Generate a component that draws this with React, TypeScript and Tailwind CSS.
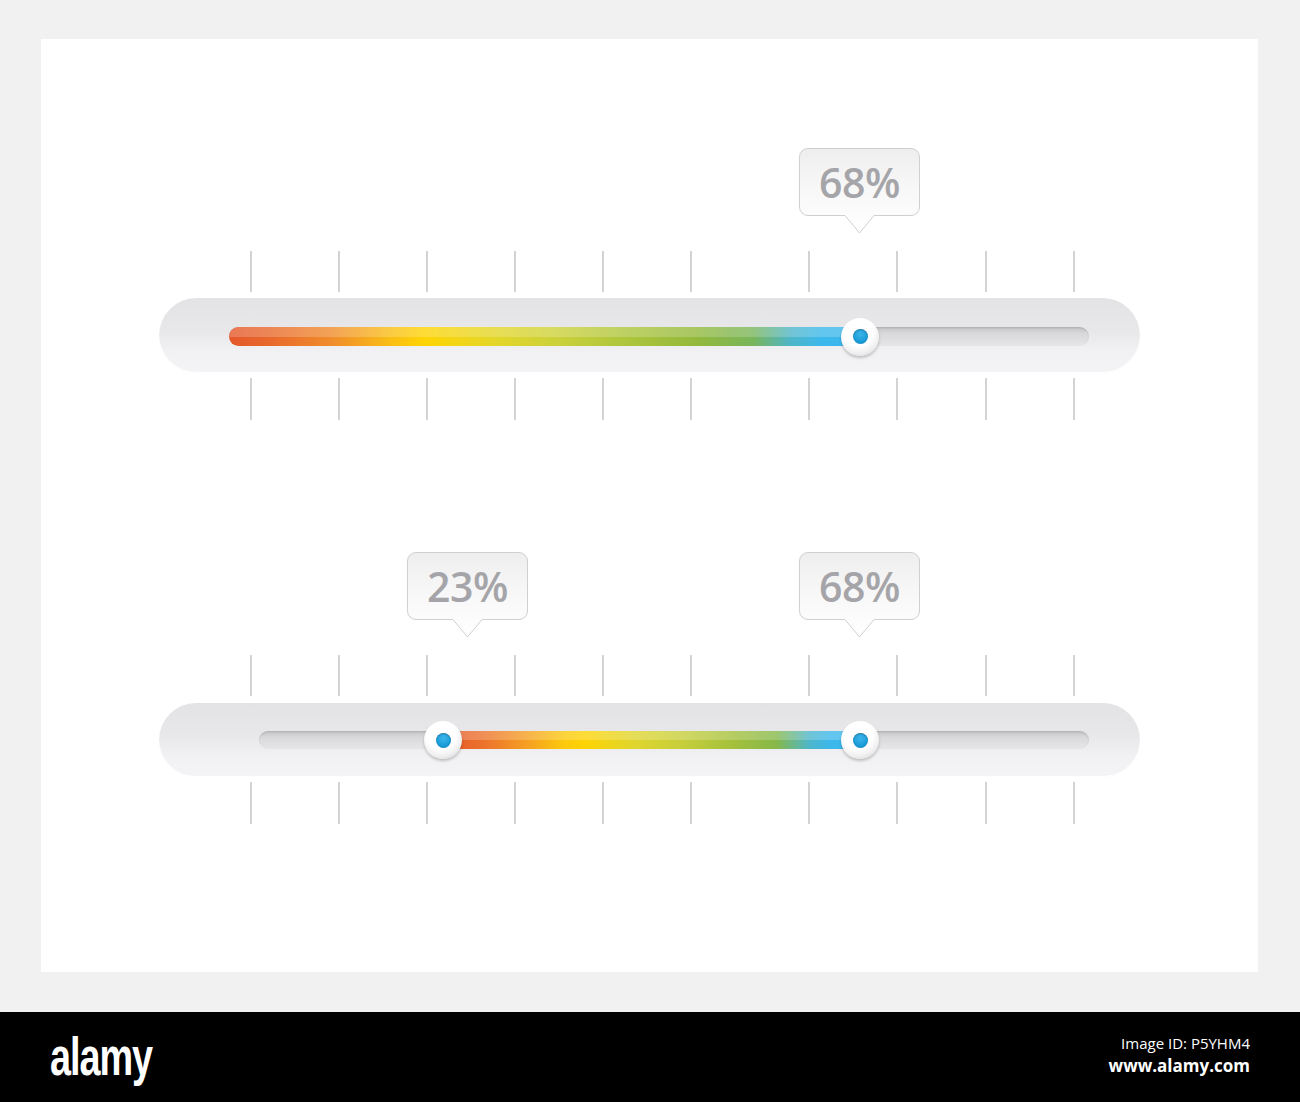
import React from "react";

// Tick positions along the scale, in px from the left edge of the slider pill
const TICKS = [92, 180, 268, 356, 444, 532, 650, 738, 827, 915];

function Ticks({ height }: { height: number }) {
  return (
    <div className="flex" style={{ height }}>
      {TICKS.map((x, i) => (
        <div
          key={i}
          className="w-[2px] h-full bg-[#d3d3d5] shrink-0"
          style={{ marginLeft: i === 0 ? x - 1 : x - TICKS[i - 1] - 2 }}
        />
      ))}
    </div>
  );
}

function Bubble({ label, center }: { label: string; center: number }) {
  const gid = `bubble-${label.replace("%", "")}-${center}`;
  return (
    <div className="absolute top-0 w-[121px] h-[86px]" style={{ left: center - 60 }}>
      <svg width="121" height="86" viewBox="0 0 121 86" className="absolute inset-0">
        <defs>
          <linearGradient id={gid} x1="0" y1="0" x2="0" y2="1">
            <stop offset="0" stopColor="#eeeeef" />
            <stop offset="0.45" stopColor="#f7f7f8" />
            <stop offset="1" stopColor="#ffffff" />
          </linearGradient>
        </defs>
        <path
          d="M9 0.5 H112 A8.5 8.5 0 0 1 120.5 9 V59 A8.5 8.5 0 0 1 112 67.5 H75 L60.5 85 L46 67.5 H9 A8.5 8.5 0 0 1 0.5 59 V9 A8.5 8.5 0 0 1 9 0.5 Z"
          fill={`url(#${gid})`}
          stroke="#d0d0d3"
          strokeWidth="1"
        />
      </svg>
      <div className="relative h-[68px] flex items-center justify-center font-['Open_Sans',sans-serif] font-semibold text-[41px] leading-none text-[#a5a5a9] tracking-[-0.5px]">
        {label}
      </div>
    </div>
  );
}

function Knob({ x }: { x: number }) {
  return (
    <div
      className="absolute top-1/2 -translate-y-1/2 -translate-x-1/2 w-[38px] h-[38px] rounded-full bg-[radial-gradient(circle_at_45%_35%,#ffffff_0%,#ffffff_45%,#efeff0_68%,#cfcfd2_92%,#c3c3c6_100%)] shadow-[0_2px_3px_rgba(0,0,0,0.22)] flex items-center justify-center"
      style={{ left: x }}
    >
      <div className="w-[15px] h-[15px] rounded-full bg-[radial-gradient(circle_at_50%_35%,#3cb6ea_0%,#1b9bd7_60%,#0f80bb_100%)] shadow-[inset_0_1px_1px_rgba(0,0,0,0.25)]" />
    </div>
  );
}

function Pill({ children, height }: { children: React.ReactNode; height: number }) {
  return (
    <div
      className="w-[981px] rounded-full bg-[linear-gradient(180deg,#e3e3e5_0%,#e8e8ea_45%,#f1f1f3_70%,#f4f4f6_100%)] shadow-[inset_0_-1px_0_rgba(255,255,255,0.9)]"
      style={{ height }}
    >
      {children}
    </div>
  );
}

function SingleSlider() {
  // groove runs from 70px to 930px inside the pill; knob sits at 701px
  return (
    <div className="relative w-[981px]">
      <div className="relative h-[85px]">
        <Bubble label="68%" center={700} />
      </div>
      <div className="mt-[18px]">
        <Ticks height={41} />
      </div>
      <div className="mt-[6px]">
        <Pill height={75}>
          <div className="pt-[29px] pl-[70px] pr-[51px]">
            <div className="relative h-[19px] rounded-full bg-[linear-gradient(180deg,#c4c4c6_0%,#d9d9db_35%,#e6e6e8_100%)] shadow-[inset_0_1px_2px_rgba(0,0,0,0.12)]">
              <div className="absolute left-0 top-0 h-full w-[631px] rounded-full bg-[linear-gradient(90deg,#e4572b_0%,#e96a2c_7%,#f08b2c_16%,#f9bb17_25%,#fed404_31%,#e4d629_42%,#cbd13a_52%,#b0c63c_62%,#93b93c_74%,#79b55a_83%,#4fb6c8_89%,#3cb8ec_94%,#3cb8ec_100%)]">
                <div className="absolute inset-x-0 top-0 h-1/2 rounded-t-full bg-white/20" />
              </div>
              <Knob x={631} />
            </div>
          </div>
        </Pill>
      </div>
      <div className="mt-[5px]">
        <Ticks height={42} />
      </div>
    </div>
  );
}

function RangeSlider() {
  // groove runs from 100px to 930px inside the pill; knobs at 284px and 701px
  return (
    <div className="relative w-[981px]">
      <div className="relative h-[85px]">
        <Bubble label="23%" center={308} />
        <Bubble label="68%" center={700} />
      </div>
      <div className="mt-[18px]">
        <Ticks height={41} />
      </div>
      <div className="mt-[7px]">
        <Pill height={74}>
          <div className="pt-[28px] pl-[100px] pr-[51px]">
            <div className="relative h-[18px] rounded-full bg-[linear-gradient(180deg,#c4c4c6_0%,#d9d9db_35%,#e6e6e8_100%)] shadow-[inset_0_1px_2px_rgba(0,0,0,0.12)]">
              <div className="absolute left-[184px] top-0 h-full w-[417px] bg-[linear-gradient(90deg,#e4572b_0%,#ec732c_10%,#f59f22_20%,#fcc90c_29%,#fed404_34%,#dfd52e_46%,#c5ce3b_58%,#a3c03c_70%,#86b84a_80%,#4db6cc_88%,#3cb8ec_93%,#3cb8ec_100%)]">
                <div className="absolute inset-x-0 top-0 h-1/2 bg-white/20" />
              </div>
              <Knob x={184} />
              <Knob x={601} />
            </div>
          </div>
        </Pill>
      </div>
      <div className="mt-[5px]">
        <Ticks height={42} />
      </div>
    </div>
  );
}

export default function App() {
  return (
    <div className="w-[1300px] h-[1102px] bg-[#f1f1f2] flex flex-col">
      <div className="pt-[39px] pb-[40px] pl-[41px] pr-[42px]">
        <div className="bg-white h-[933px] pt-[109px] pl-[118px]">
          <SingleSlider />
          <div className="mt-[132px]">
            <RangeSlider />
          </div>
        </div>
      </div>
      <footer className="h-[90px] bg-black flex items-center justify-between pl-[50px] pr-[50px]">
        <div className="w-[110px] h-[60px] flex items-center">
          <span className="inline-block origin-left scale-x-[0.7] font-['Liberation_Sans',Arial,sans-serif] font-bold text-[54px] leading-none text-white tracking-[-1.5px] -mt-[2px]">
            alamy
          </span>
        </div>
        <div className="flex flex-col items-end text-white font-['Open_Sans',sans-serif] -mt-[4px]">
          <span className="text-[15px] leading-[22px]">Image ID: P5YHM4</span>
          <span className="text-[17px] leading-[24px] font-bold">www.alamy.com</span>
        </div>
      </footer>
    </div>
  );
}
